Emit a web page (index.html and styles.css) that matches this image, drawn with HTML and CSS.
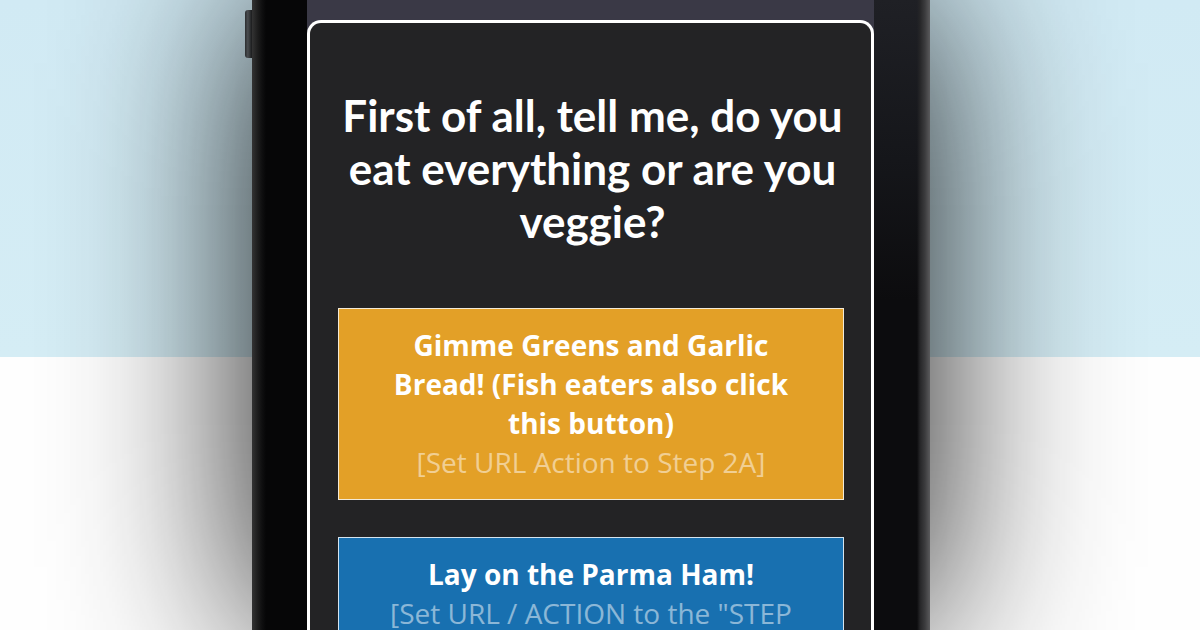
FILE: index.html
```html
<!DOCTYPE html>
<html lang="en">
<head>
  <meta charset="UTF-8">
  <meta name="viewport" content="width=device-width, initial-scale=1.0">
  <title>Step 1 - Veggie or not</title>
  <link rel="stylesheet" href="styles.css">
</head>
<body>
  <div class="stage">
    <div class="side-btn"></div>
    <div class="phone">
      <div class="bezel bezel-left"></div>
      <div class="screen">
        <div class="card">
          <h1 class="question">First of all, tell me, do you eat everything or are you veggie?</h1>
          <a href="javascript:;" class="choice choice-veg">
            <span class="label">Gimme Greens and Garlic Bread! (Fish eaters also click this button)</span>
            <span class="hint">[Set URL Action to Step 2A]</span>
          </a>
          <a href="javascript:;" class="choice choice-meat">
            <span class="label">Lay on the Parma Ham!</span>
            <span class="hint">[Set URL / ACTION to the "STEP 2B" STEP]</span>
          </a>
        </div>
      </div>
      <div class="bezel bezel-right"></div>
    </div>
  </div>
</body>
</html>
```

FILE: styles.css
```css
* {
  margin: 0;
  padding: 0;
  box-sizing: border-box;
  text-decoration: none;
}
html, body {
  width: 100%;
  height: 100%;
  overflow: hidden;
}
body {
  background: linear-gradient(to bottom, #d2ebf5 0, #d6eef6 357px, #fff 357px, #fff 100%);
}
.stage {
  display: flex;
  align-items: flex-start;
  height: 630px;
  padding-left: 245px;
}
.side-btn {
  position: relative;
  z-index: 1;
  width: 7px;
  height: 48px;
  margin-top: 10px;
  border-radius: 3px 0 0 3px;
  background: linear-gradient(to right, #2a2c2e, #4a4d50 40%, #1a1b1c);
}
.phone {
  display: flex;
  width: 678px;
  height: 630px;
  background: #09090b;
  box-shadow: 0 0 180px 0 rgba(0, 0, 0, 0.9);
}
.bezel {
  height: 100%;
}
.bezel-left {
  width: 55px;
  background: linear-gradient(to right, #333 0, #1c1c1c 6px, #0f0f10 10px, #060607 14px, #060607 100%);
}
.bezel-right {
  width: 56px;
  background:
    linear-gradient(to right, rgba(0,0,0,0) 0, rgba(0,0,0,0) 43px, #262628 46px, #3c3c3e 51px, #5a5a5c 56px),
    linear-gradient(to bottom, #1f2025 0, #15161a 160px, #0c0c0e 300px);
}
.screen {
  width: 567px;
  padding-top: 20px;
  background: #3a3946;
}
.card {
  height: 100%;
  padding-top: 66px;
  border: 3px solid #fff;
  border-bottom: 0;
  border-radius: 14px 14px 0 0;
  background: #232325;
}
.question {
  padding: 0 12px 0 16px;
  font-family: Lato, "Open Sans", sans-serif;
  font-size: 44px;
  font-weight: 700;
  line-height: 53px;
  color: #fff;
  text-align: center;
}
.choice {
  display: flex;
  flex-direction: column;
  align-items: center;
  margin: 0 27px 0 28px;
  padding: 17px 41px;
  border: 1px solid #f2ead8;
  font-family: "Open Sans", sans-serif;
  font-size: 28px;
  line-height: 39px;
  color: #fff;
  text-align: center;
}
.choice-veg {
  margin-top: 60px;
  background: #e3a027;
}
.choice-meat {
  margin-top: 37px;
  background: #1870b0;
  border-color: #d5e4ef;
}
.label {
  font-weight: 700;
}
.hint {
  font-weight: 400;
  color: rgba(255, 255, 255, 0.5);
}
```
